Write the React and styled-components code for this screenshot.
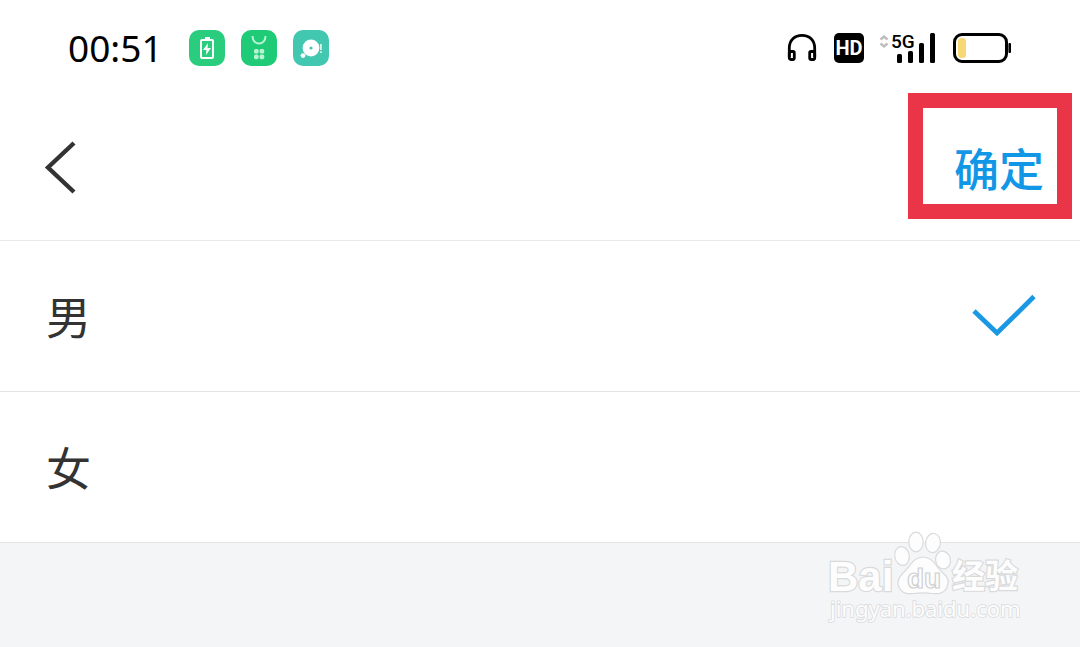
import React, { useState } from "react";
import styled, { createGlobalStyle } from "styled-components";

const GlobalStyle = createGlobalStyle`
  * { box-sizing: border-box; }
  body {
    margin: 0;
    background: #f4f5f7;
    color: #333;
    font-family: "Noto Sans CJK SC", "Noto Sans", sans-serif;
  }
`;

const Page = styled.div`
  position: relative;
  min-height: 100vh;
  overflow: hidden;
`;

const StatusBar = styled.div`
  display: flex;
  align-items: center;
  justify-content: space-between;
  height: 96px;
  padding: 0 68px;
  background: #fff;
  color: #000;
`;

const StatusGroup = styled.div`
  display: flex;
  align-items: center;
  gap: 16px;
`;

const Clock = styled.time`
  margin-right: 10px;
  font: 400 37px/48px "Noto Sans", sans-serif;
`;

const AppBadge = styled.span`
  display: flex;
  width: 36px;
  height: 36px;
  border-radius: 10px;
  background: ${(p) => p.$color};
`;

const HdBadge = styled.span`
  width: 30px;
  height: 30px;
  border-radius: 5px;
  background: #000;
  color: #fff;
  text-align: center;
  font: 700 20px/30px Roboto, sans-serif;
`;

const Header = styled.header`
  display: flex;
  align-items: center;
  justify-content: space-between;
  height: 145px;
  padding: 0 36px 0 40px;
  background: #fff;
  border-bottom: 1px solid #e9e9e9;
`;

const IconButton = styled.button`
  display: flex;
  padding: 0;
  border: 0;
  background: none;
  color: #333;
  cursor: pointer;
`;

const ConfirmButton = styled.button`
  position: relative;
  padding: 0;
  border: 0;
  background: none;
  color: #1296e6;
  font: 500 45px/56px "Noto Sans CJK SC", sans-serif;
  cursor: pointer;
`;

const Highlight = styled.span`
  position: absolute;
  inset: -47px -28px -23px -46px;
  border: 15px solid #ea3447;
  pointer-events: none;
`;

const Options = styled.fieldset`
  margin: 0;
  padding: 0;
  border: 0;
`;

const Option = styled.label`
  display: flex;
  align-items: center;
  justify-content: space-between;
  height: 151px;
  padding: 0 44px 0 46px;
  background: #fff;
  border-bottom: 1px solid #e3e4e6;
  font-size: 45px;
  line-height: 64px;
  cursor: pointer;
`;

const Radio = styled.input`
  position: absolute;
  width: 64px;
  height: 44px;
  margin: 0;
  appearance: none;
  opacity: 0;
`;

const Watermark = styled.svg`
  position: absolute;
  right: 56px;
  bottom: 18px;
  overflow: visible;
  pointer-events: none;
`;

const Headphones = () => (
  <svg width="31" height="30" viewBox="0 0 31 30" fill="none" stroke="#000" strokeWidth="2.8">
    <path d="M2.3 24V15C2.3 7 7.6 2.3 15 2.3S27.7 7 27.7 15v9" />
    <rect x="2.3" y="18.5" width="5" height="8" rx="1.4" />
    <rect x="22.7" y="18.5" width="5" height="8" rx="1.4" />
  </svg>
);

const Signal = () => (
  <svg width="57" height="32" viewBox="0 0 57 32" overflow="visible">
    <path d="M.5 7.5 4 4.5l3.5 3M.5 11.5l3.5 3 3.5-3" fill="none" stroke="#bdbdbd" strokeWidth="2.4" />
    <text x="11" y="16" fontFamily="Roboto, sans-serif" fontSize="19" fontWeight="500">5G</text>
    <rect x="17" y="22" width="5" height="9" rx="1.5" />
    <rect x="28" y="19" width="5" height="12" rx="1.5" />
    <rect x="39" y="11" width="5" height="20" rx="1.5" />
    <rect x="50" y="1" width="5" height="30" rx="1.5" />
  </svg>
);

const Battery = () => (
  <svg width="59" height="30" viewBox="0 0 59 30">
    <rect x="1.5" y="1.5" width="52" height="27" rx="7.5" fill="none" stroke="#000" strokeWidth="3" />
    <rect x="5" y="5" width="8" height="20" rx="3.5" fill="#f7d774" />
    <rect x="55.4" y="10" width="2.6" height="10" rx="1" />
  </svg>
);

const CheckMark = () => (
  <svg width="64" height="44" viewBox="0 0 64 44" fill="none" stroke="#1b98e4" strokeWidth="4.8">
    <path d="M2 17 25 39 62 2.5" />
  </svg>
);

const BaiduMark = () => (
  <Watermark width="202" height="104" viewBox="0 0 202 104" fill="#fdfdfd" stroke="#d9dadc" strokeWidth="1.2">
    <g paintOrder="stroke" strokeWidth="2.4" fontFamily='"Liberation Sans", sans-serif'>
      <text x="6" y="66" fontSize="42" fontWeight="700">Bai</text>
      <text x="130" y="63" fontFamily='"Noto Sans CJK SC", sans-serif' fontSize="33" fontWeight="700">经验</text>
      <text x="8" y="92" fontFamily='"Noto Sans", sans-serif' fontSize="22" strokeWidth="1.6">jingyan.baidu.com</text>
    </g>
    <ellipse cx="80" cy="31" rx="7.2" ry="9.5" transform="rotate(-10 80 31)" />
    <ellipse cx="94" cy="17" rx="7.2" ry="9.8" />
    <ellipse cx="111" cy="18" rx="7.4" ry="9.6" transform="rotate(8 111 18)" />
    <ellipse cx="121" cy="35" rx="7.4" ry="9" transform="rotate(-12 121 35)" />
    <path d="M101 32c10 0 13 10 20 16 6 5 6 10 4 14-3 7-9 7-15 6.500-6-.8-12-.8-18 0-6 .5-12 .5-15-6.500-2-4-1-9 4-14 7-6 10-16 20-16Z" />
    <text x="85" y="63" fontFamily='"Liberation Sans", sans-serif' fontSize="28" fontWeight="700" strokeWidth="1.2" stroke="#cfd0d2">du</text>
  </Watermark>
);

export default function App() {
  const [gender, setGender] = useState("男");
  return (
    <Page>
      <GlobalStyle />
      <StatusBar>
        <StatusGroup>
          <Clock>00:51</Clock>
          <AppBadge $color="#2acd7d">
            <svg width="36" height="36" viewBox="0 0 36 36">
              <path d="M16 7h5v2h-5z" fill="#fff" />
              <rect x="12" y="10" width="12" height="18" rx="1" fill="none" stroke="#fff" strokeWidth="2" />
              <path d="m19 13-5 7h3.4L17 25l5-7h-3.4z" fill="#fff" />
            </svg>
          </AppBadge>
          <AppBadge $color="#20cb77">
            <svg width="36" height="36" viewBox="0 0 36 36" fill="#b9f3d5">
              <path d="M11.500 6c0 10 13 10 13 0" fill="none" stroke="#b9f3d5" strokeWidth="2" />
              <rect x="13" y="19" width="4.6" height="4.6" rx="1.6" />
              <rect x="18.6" y="19" width="4.6" height="4.6" rx="1.6" />
              <rect x="13" y="24.6" width="4.6" height="4.6" rx="1.6" />
              <rect x="18.6" y="24.6" width="4.6" height="4.6" rx="1.6" />
            </svg>
          </AppBadge>
          <AppBadge $color="#42c8b0">
            <svg width="36" height="36" viewBox="0 0 36 36" fill="#fff">
              <circle cx="18" cy="18" r="8.4" />
              <circle cx="18" cy="18" r="1.6" fill="#42c8b0" />
              <circle cx="10" cy="25.6" r="2.4" />
              <path d="M27 14h1.8v6H27zM27 21.2h1.8V23H27z" opacity=".8" />
            </svg>
          </AppBadge>
        </StatusGroup>
        <StatusGroup>
          <Headphones />
          <HdBadge>HD</HdBadge>
          <Signal />
          <Battery />
        </StatusGroup>
      </StatusBar>
      <Header>
        <IconButton type="button" aria-label="返回">
          <svg width="40" height="56" viewBox="0 0 40 56" fill="none" stroke="currentColor" strokeWidth="4.4">
            <path d="M34 3 8 27.5 34 52" />
          </svg>
        </IconButton>
        <ConfirmButton type="button">
          确定
          <Highlight />
        </ConfirmButton>
      </Header>
      <Options aria-label="性别">
        {["男", "女"].map((name) => (
          <Option key={name}>
            {name}
            <Radio type="radio" name="gender" value={name} checked={gender === name} onChange={() => setGender(name)} />
            {gender === name && <CheckMark />}
          </Option>
        ))}
      </Options>
      <BaiduMark />
    </Page>
  );
}
